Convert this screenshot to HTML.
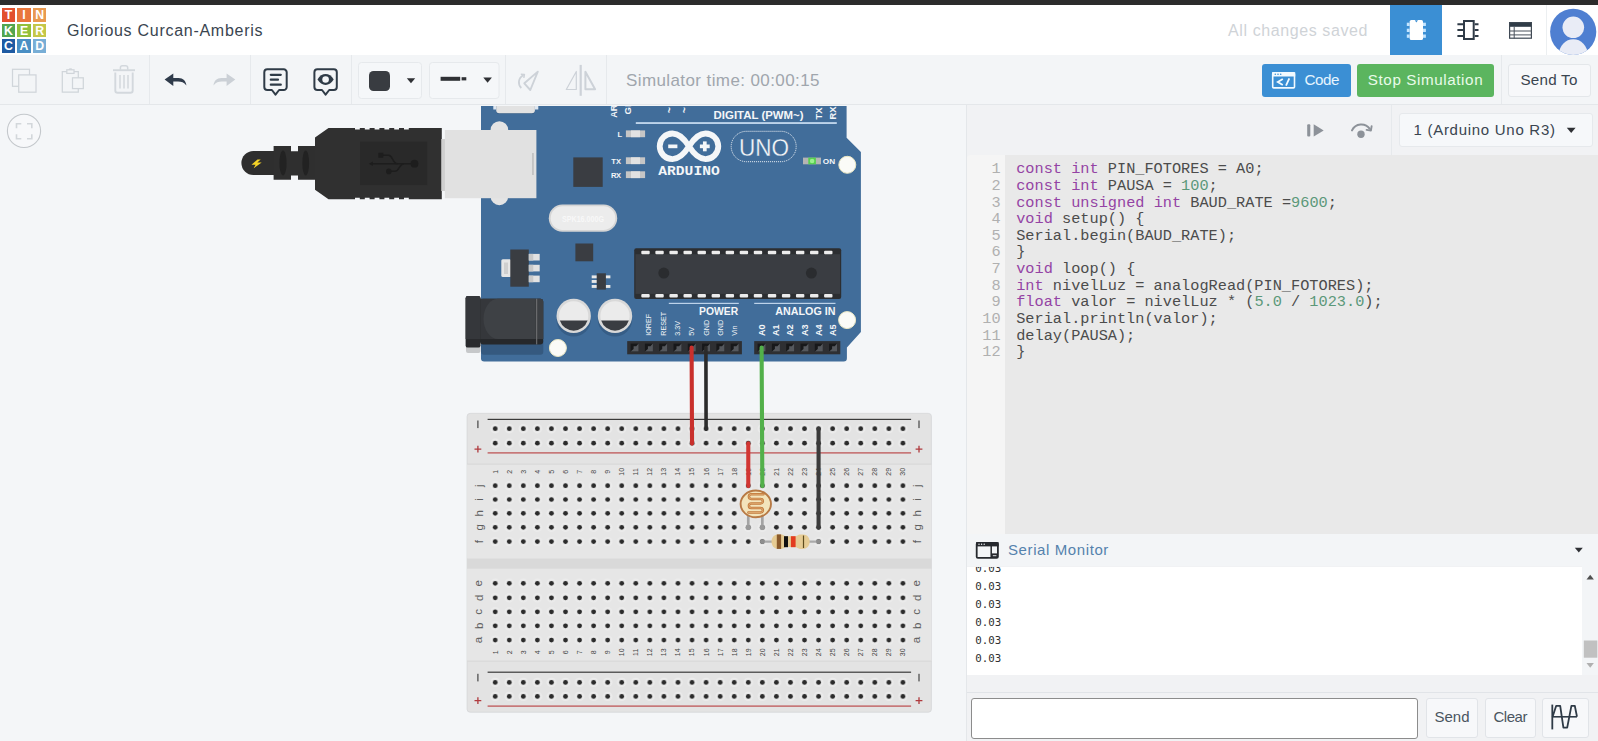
<!DOCTYPE html>
<html lang="en">
<head>
<meta charset="utf-8">
<title>Circuit design Glorious Curcan-Amberis | Tinkercad</title>
<style>
*{box-sizing:border-box;margin:0;padding:0}
html,body{width:1598px;height:741px;overflow:hidden;background:#f4f6f8;font-family:"Liberation Sans",sans-serif;color:#3c4650}
.abs{position:absolute}
#topbar{left:0;top:0;width:1598px;height:5px;background:#2c2c2c}
#header{left:0;top:5px;width:1598px;height:50px;background:#fff}
#toolbar{left:0;top:55px;width:1598px;height:50px;background:#f3f5f7;border-bottom:1px solid #e4e7ea}
.tile{position:absolute;width:13.6px;height:13.6px;color:#fff;font-weight:bold;font-size:12.3px;line-height:14px;text-align:center}
#title{left:67px;top:20px;font-size:16px;line-height:20px;color:#3a4550;white-space:nowrap;letter-spacing:0.72px}
#saved{left:1228px;top:20px;font-size:16px;line-height:20px;color:#c8ccd0;white-space:nowrap}
.vsep{position:absolute;width:1px;background:#e6e9ec}
.btn{position:absolute;top:64px;height:32.5px;border-radius:3px;color:#fff;font-size:15.2px;line-height:32px;white-space:nowrap}
#canvas{left:0;top:104px;width:966px;height:637px;background:#f4f6f8;overflow:hidden}
#right{left:966px;top:104px;width:632px;height:637px;background:#f1f2f4;border-left:1px solid #e4e7ea}
</style>
</head>
<body>
<div class="abs" id="canvas">
<svg class="abs" style="left:0;top:0" width="966" height="637" viewBox="0 104 966 637" font-family="Liberation Sans, sans-serif">
<circle cx="24" cy="130.900" r="16.600" fill="#f7f8fa" stroke="#c4c8cc" stroke-width="1.100"/>
<path d="M16.500 128.300v-4.500h4.800M27 123.800h4.800v4.500M31.800 134.300v4.500h-4.800M21.300 138.800h-4.800v-4.500" fill="none" stroke="#d3d7db" stroke-width="1.600"/>
<g id="usb">
<path d="M253.400 151h21v24h-21a12 12 0 0 1 0 -24z" fill="#2e2e2e"/>
<path d="M257.500 159.500l-6 5.200h4l-1.800 3.600l8 -5.800h-4.400l3.400 -3z" fill="#f5d327"/>
<path d="M273.600 146h17.400v5.200h7v-5.200h17.500v33.700h-17.500v-4.200h-7v4.200h-17.400z" fill="#2f2f2f"/>
<ellipse cx="283" cy="163" rx="3.600" ry="12.500" fill="#222"/>
<ellipse cx="305.700" cy="163" rx="3.400" ry="12.500" fill="#222"/>
<path d="M315 137.500l13.500 -9.500h26.500v1.500h4.800v-1.500h5v1.500h4.800v-1.500h5v1.500h4.800v-1.500h5v1.500h4.800v-1.500h5v1.500h4.800v-1.500h5v1.500h4.800v-1.500h33v71.200h-33v-1.500h-4.800v1.500h-5v-1.500h-4.800v1.500h-5v-1.500h-4.800v1.500h-5v-1.500h-4.800v1.500h-5v-1.500h-4.800v1.500h-5v-1.500h-4.800v1.500h-26.500l-13.500 -9.500z" fill="#303030"/>
<rect x="360.200" y="141.700" width="67" height="43.400" fill="#292929"/>
<g fill="none" stroke="#1d1d1d" stroke-width="1.500"><path d="M371.500 163.700h40"/><path d="M383 155.300H388.500C393 155.300 392.500 163.700 397.500 163.700"/><path d="M391 171.300H395C399.500 171.300 399 163.700 404 163.700"/></g>
<path d="M368.800 163.700l4 -2.300v4.600z" fill="#1d1d1d"/><circle cx="414.500" cy="163.700" r="3.900" fill="#1d1d1d"/><rect x="378.300" y="152.800" width="5" height="5" fill="#1d1d1d"/><circle cx="388.800" cy="171.400" r="2.800" fill="#1d1d1d"/>
</g>
<g id="uno">
<path d="M481 106h365.600v31.800l14.300 14.200v180.100l-14 15.500v10.600a3.200 3.200 0 0 1 -3.200 3.200h-359.500a3.200 3.200 0 0 1 -3.200 -3.200z" fill="#416d9a"/>
<path d="M493.300 106h45v3.500h-45z" fill="#dfe7f0"/>
<path d="M496.200 106h38.700v5a3 3 0 0 1 -3 3h-32.700a3 3 0 0 1 -3 -3z" fill="#355c85"/>
<path d="M496.200 106h38.700v4.200a3 3 0 0 1 -3 3h-32.700a3 3 0 0 1 -3 -3z" fill="#e2e2e2"/>
<rect x="490.600" y="121.200" width="17.600" height="84" rx="8.800" fill="#e4e4e4"/>
<rect x="441.300" y="139" width="5" height="52" fill="#cfcfcf"/>
<rect x="444.900" y="130" width="91.500" height="68.200" fill="#e1e1e1"/>
<rect x="532.300" y="153" width="1.300" height="22" fill="#b8b8b8"/>
<rect x="466" y="343" width="14.500" height="10" rx="2" fill="#c6c8ca"/>
<rect x="481" y="338" width="62.300" height="16.700" rx="3" fill="#35597f"/>
<rect x="480" y="298.800" width="63.200" height="45.600" rx="3" fill="#26282b"/>
<path d="M480 298.800h60.200a3 3 0 0 1 3 3v37.200h-63.200z" fill="#35373b"/>
<path d="M498 298.800h37.600v40.200h-37.600a14.500 20.100 0 0 1 0 -40.200z" fill="#3e4145"/>
<path d="M537.200 298.800h3a3 3 0 0 1 3 3v37.200h-6z" fill="#3c3f43"/>
<rect x="536.200" y="298.800" width="1" height="45.600" fill="#77787a"/>
<rect x="465.600" y="296.100" width="14.900" height="51.500" rx="2.200" fill="#292a2d"/>
<path d="M467.800 296.100h10.500a2.200 2.200 0 0 1 2.200 2.200v40.700h-14.900v-40.700a2.200 2.200 0 0 1 2.200 -2.200z" fill="#35373b"/>
<rect x="573.300" y="157.400" width="29.400" height="29.500" fill="#3a3d42"/>
<rect x="575.400" y="243.500" width="17.800" height="17.800" fill="#3a3d42"/>
<rect x="548.800" y="204.600" width="68.400" height="27.200" rx="13.600" fill="#d5d5d5"/>
<rect x="550.700" y="206.300" width="64.600" height="23.800" rx="11.900" fill="#ececec"/>
<text x="583" y="221.500" font-size="9" fill="#f8f8f8" text-anchor="middle" font-weight="bold" textLength="42" lengthAdjust="spacingAndGlyphs">SPK16.000G</text>
<rect x="501.300" y="259.300" width="10" height="17.700" rx="1.500" fill="#e6e6e6"/><rect x="504" y="262.500" width="4" height="11.500" fill="#cfcfcf"/>
<rect x="510.300" y="249.500" width="18.500" height="37.200" fill="#3a3d42"/>
<rect x="528.800" y="253.9" width="10.900" height="6.600" fill="#e2e2e2"/>
<rect x="528.800" y="253.9" width="4.500" height="6.600" fill="#c9c9c9"/>
<rect x="528.800" y="264.8" width="10.900" height="6.600" fill="#e2e2e2"/>
<rect x="528.800" y="264.8" width="4.500" height="6.600" fill="#c9c9c9"/>
<rect x="528.800" y="275.6" width="10.900" height="6.600" fill="#e2e2e2"/>
<rect x="528.800" y="275.6" width="4.500" height="6.600" fill="#c9c9c9"/>
<rect x="591.700" y="275.4" width="6" height="2.900" fill="#e8e8e8"/>
<rect x="591.700" y="280" width="6" height="2.900" fill="#e8e8e8"/>
<rect x="591.700" y="285" width="6" height="2.900" fill="#e8e8e8"/>
<rect x="605" y="275.4" width="5.400" height="2.900" fill="#e8e8e8"/>
<rect x="605" y="285" width="5.400" height="2.900" fill="#e8e8e8"/>
<rect x="596.700" y="273.300" width="9.200" height="16.300" fill="#3a3d42"/>
<circle cx="573.7" cy="319.400" r="17.200" fill="#365d86"/>
<circle cx="573.7" cy="315.900" r="17.200" fill="#d9d9d9"/>
<circle cx="573.7" cy="315.900" r="14.600" fill="#ebebeb"/>
<path d="M559.8 320.500h27.800a14.600 14.600 0 0 1 -27.800 0z" fill="#3a3d42"/>
<circle cx="615" cy="319.400" r="17.200" fill="#365d86"/>
<circle cx="615" cy="315.900" r="17.200" fill="#d9d9d9"/>
<circle cx="615" cy="315.900" r="14.600" fill="#ebebeb"/>
<path d="M601.1 320.500h27.800a14.600 14.600 0 0 1 -27.800 0z" fill="#3a3d42"/>
<circle cx="847.3" cy="164.8" r="8.500" fill="#fbfbf7" stroke="#ece8c4" stroke-width="1"/>
<circle cx="847.1" cy="320.1" r="8.500" fill="#fbfbf7" stroke="#ece8c4" stroke-width="1"/>
<circle cx="557.9" cy="348" r="8.500" fill="#fbfbf7" stroke="#ece8c4" stroke-width="1"/>
<rect x="634.200" y="248.300" width="207" height="50.700" rx="2" fill="#2c2e31"/>
<rect x="635.500" y="254.200" width="204.500" height="39.700" fill="#3a3d42"/>
<rect x="641.3" y="250.700" width="8.400" height="3.500" rx="1" fill="#ececec"/>
<rect x="641.3" y="294.100" width="8.400" height="3.500" rx="1" fill="#ececec"/>
<rect x="655.36" y="250.700" width="8.400" height="3.500" rx="1" fill="#ececec"/>
<rect x="655.36" y="294.100" width="8.400" height="3.500" rx="1" fill="#ececec"/>
<rect x="669.42" y="250.700" width="8.400" height="3.500" rx="1" fill="#ececec"/>
<rect x="669.42" y="294.100" width="8.400" height="3.500" rx="1" fill="#ececec"/>
<rect x="683.48" y="250.700" width="8.400" height="3.500" rx="1" fill="#ececec"/>
<rect x="683.48" y="294.100" width="8.400" height="3.500" rx="1" fill="#ececec"/>
<rect x="697.54" y="250.700" width="8.400" height="3.500" rx="1" fill="#ececec"/>
<rect x="697.54" y="294.100" width="8.400" height="3.500" rx="1" fill="#ececec"/>
<rect x="711.6" y="250.700" width="8.400" height="3.500" rx="1" fill="#ececec"/>
<rect x="711.6" y="294.100" width="8.400" height="3.500" rx="1" fill="#ececec"/>
<rect x="725.66" y="250.700" width="8.400" height="3.500" rx="1" fill="#ececec"/>
<rect x="725.66" y="294.100" width="8.400" height="3.500" rx="1" fill="#ececec"/>
<rect x="739.72" y="250.700" width="8.400" height="3.500" rx="1" fill="#ececec"/>
<rect x="739.72" y="294.100" width="8.400" height="3.500" rx="1" fill="#ececec"/>
<rect x="753.78" y="250.700" width="8.400" height="3.500" rx="1" fill="#ececec"/>
<rect x="753.78" y="294.100" width="8.400" height="3.500" rx="1" fill="#ececec"/>
<rect x="767.84" y="250.700" width="8.400" height="3.500" rx="1" fill="#ececec"/>
<rect x="767.84" y="294.100" width="8.400" height="3.500" rx="1" fill="#ececec"/>
<rect x="781.9" y="250.700" width="8.400" height="3.500" rx="1" fill="#ececec"/>
<rect x="781.9" y="294.100" width="8.400" height="3.500" rx="1" fill="#ececec"/>
<rect x="795.96" y="250.700" width="8.400" height="3.500" rx="1" fill="#ececec"/>
<rect x="795.96" y="294.100" width="8.400" height="3.500" rx="1" fill="#ececec"/>
<rect x="810.02" y="250.700" width="8.400" height="3.500" rx="1" fill="#ececec"/>
<rect x="810.02" y="294.100" width="8.400" height="3.500" rx="1" fill="#ececec"/>
<rect x="824.08" y="250.700" width="8.400" height="3.500" rx="1" fill="#ececec"/>
<rect x="824.08" y="294.100" width="8.400" height="3.500" rx="1" fill="#ececec"/>
<circle cx="663.800" cy="273.100" r="5.500" fill="#2a2c2f"/><circle cx="811.400" cy="273.100" r="5.500" fill="#2a2c2f"/>
<rect x="625.900" y="130.4" width="19.200" height="6.800" fill="#c6c6c6"/>
<rect x="631" y="130.4" width="9" height="6.800" fill="#e2e2e2"/>
<rect x="625.900" y="157.3" width="19.200" height="6.800" fill="#c6c6c6"/>
<rect x="631" y="157.3" width="9" height="6.800" fill="#e2e2e2"/>
<rect x="625.900" y="171.3" width="19.200" height="6.800" fill="#c6c6c6"/>
<rect x="631" y="171.3" width="9" height="6.800" fill="#e2e2e2"/>
<rect x="803" y="157.600" width="18" height="6.700" fill="#b4b4b4"/><rect x="808.300" y="157.600" width="7.600" height="6.700" fill="#55d04f"/><circle cx="812.100" cy="161" r="2.300" fill="#9af08e"/>
<g fill="#f4f6f8" font-weight="bold">
<text x="617.600" y="137.200" font-size="7.600">L</text>
<text x="611.300" y="164" font-size="7.600" textLength="9.800">TX</text>
<text x="611" y="178" font-size="7.600" textLength="10.200">RX</text>
<text x="822.800" y="163.500" font-size="7.600" textLength="12.300" lengthAdjust="spacingAndGlyphs">ON</text>
<text x="713.600" y="119" font-size="10.800" textLength="90" lengthAdjust="spacingAndGlyphs">DIGITAL (PWM~)</text>
<text x="699" y="315.200" font-size="10.400" textLength="39.200" lengthAdjust="spacingAndGlyphs">POWER</text>
<text x="775.300" y="315.200" font-size="10.400" textLength="60.200" lengthAdjust="spacingAndGlyphs">ANALOG IN</text>
<text x="658.300" y="174.800" font-size="13.600" textLength="61.400" lengthAdjust="spacingAndGlyphs" font-family="Liberation Mono, monospace">ARDUINO</text>
</g>
<rect x="635.800" y="122.100" width="201" height="1.900" fill="#bdd3ea"/>
<rect x="668.800" y="302.800" width="70" height="1.200" fill="#bdd3ea"/>
<rect x="754.200" y="302.800" width="81.300" height="1.200" fill="#bdd3ea"/>
<text transform="translate(651.3 335.8) rotate(-90)" font-size="7.2" fill="#f4f6f8" >IOREF</text>
<text transform="translate(665.6 335.8) rotate(-90)" font-size="7.2" fill="#f4f6f8" >RESET</text>
<text transform="translate(679.9 335.8) rotate(-90)" font-size="7.2" fill="#f4f6f8" >3.3V</text>
<text transform="translate(694.2 335.8) rotate(-90)" font-size="7.2" fill="#f4f6f8" >5V</text>
<text transform="translate(708.5 335.8) rotate(-90)" font-size="7.2" fill="#f4f6f8" >GND</text>
<text transform="translate(722.8 335.8) rotate(-90)" font-size="7.2" fill="#f4f6f8" >GND</text>
<text transform="translate(737.1 335.8) rotate(-90)" font-size="7.2" fill="#f4f6f8" >Vin</text>
<text transform="translate(764.7 336) rotate(-90)" font-size="9.1" fill="#f4f6f8" font-weight="bold">A0</text>
<text transform="translate(779 336) rotate(-90)" font-size="9.1" fill="#f4f6f8" font-weight="bold">A1</text>
<text transform="translate(793.3 336) rotate(-90)" font-size="9.1" fill="#f4f6f8" font-weight="bold">A2</text>
<text transform="translate(807.6 336) rotate(-90)" font-size="9.1" fill="#f4f6f8" font-weight="bold">A3</text>
<text transform="translate(821.9 336) rotate(-90)" font-size="9.1" fill="#f4f6f8" font-weight="bold">A4</text>
<text transform="translate(836.2 336) rotate(-90)" font-size="9.1" fill="#f4f6f8" font-weight="bold">A5</text>
<text transform="translate(821.8 119.6) rotate(-90)" font-size="9.4" fill="#f4f6f8" font-weight="bold">TX</text>
<text transform="translate(836 119.6) rotate(-90)" font-size="9.4" fill="#f4f6f8" font-weight="bold">RX</text>
<clipPath id="topclip"><rect x="480" y="106" width="400" height="40"/></clipPath><g clip-path="url(#topclip)">
<text transform="translate(616.6 117.8) rotate(-90)" font-size="9" fill="#f4f6f8" font-weight="bold">AREF</text>
<text transform="translate(630.6 114.5) rotate(-90)" font-size="9.6" fill="#f4f6f8" font-weight="bold">GND</text>
</g>
<text transform="translate(673 113.2) rotate(-90)" font-size="10.5" fill="#f4f6f8" font-weight="bold">~</text>
<text transform="translate(687.6 113.2) rotate(-90)" font-size="10.5" fill="#f4f6f8" font-weight="bold">~</text>
<g fill="none" stroke="#f4f6f8" stroke-width="5.800"><path d="M689 146.300c-5 -8 -10 -12.800 -16.500 -12.800a12.800 12.800 0 0 0 0 25.600c6.500 0 11.500 -4.800 16.500 -12.800c5 -8 10 -12.800 16.500 -12.800a12.800 12.800 0 0 1 0 25.600c-6.500 0 -11.500 -4.800 -16.500 -12.800z"/></g>
<rect x="668.200" y="144.500" width="9.200" height="3.700" fill="#f4f6f8"/><rect x="699.900" y="144.500" width="9.800" height="3.700" fill="#f4f6f8"/><rect x="702.950" y="141.400" width="3.700" height="9.900" fill="#f4f6f8"/>
<rect x="731.200" y="131.300" width="65" height="30.400" rx="15.200" fill="none" stroke="#f4f6f8" stroke-width="0.900" stroke-dasharray="1.100 0.900"/>
<text x="764" y="155.600" font-size="24.600" text-anchor="middle" fill="#f4f6f8" stroke="#416d9a" stroke-width="0.300" textLength="50" lengthAdjust="spacingAndGlyphs">UNO</text>
<rect x="627.2" y="341.100" width="114.7" height="13.200" fill="#2e2f32"/>
<rect x="630.6" y="343.600" width="8" height="8" fill="#17181a"/>
<path d="M630.6 351.600l3 -2.600v-2.800h2.600l2.400 -2.600v8z" fill="#55585d"/>
<rect x="644.9" y="343.600" width="8" height="8" fill="#17181a"/>
<path d="M644.9 351.600l3 -2.600v-2.800h2.600l2.400 -2.600v8z" fill="#55585d"/>
<rect x="659.2" y="343.600" width="8" height="8" fill="#17181a"/>
<path d="M659.2 351.600l3 -2.600v-2.800h2.600l2.400 -2.600v8z" fill="#55585d"/>
<rect x="673.5" y="343.600" width="8" height="8" fill="#17181a"/>
<path d="M673.5 351.600l3 -2.600v-2.800h2.600l2.400 -2.600v8z" fill="#55585d"/>
<rect x="687.8" y="343.600" width="8" height="8" fill="#17181a"/>
<path d="M687.8 351.600l3 -2.600v-2.800h2.600l2.400 -2.600v8z" fill="#55585d"/>
<rect x="702.1" y="343.600" width="8" height="8" fill="#17181a"/>
<path d="M702.1 351.600l3 -2.600v-2.800h2.600l2.400 -2.600v8z" fill="#55585d"/>
<rect x="716.4" y="343.600" width="8" height="8" fill="#17181a"/>
<path d="M716.4 351.600l3 -2.600v-2.800h2.600l2.400 -2.600v8z" fill="#55585d"/>
<rect x="730.7" y="343.600" width="8" height="8" fill="#17181a"/>
<path d="M730.7 351.600l3 -2.600v-2.800h2.600l2.400 -2.600v8z" fill="#55585d"/>
<rect x="754.2" y="341.100" width="86.1" height="13.200" fill="#2e2f32"/>
<rect x="757.6" y="343.600" width="8" height="8" fill="#17181a"/>
<path d="M757.6 351.600l3 -2.600v-2.800h2.600l2.400 -2.600v8z" fill="#55585d"/>
<rect x="771.9" y="343.600" width="8" height="8" fill="#17181a"/>
<path d="M771.9 351.600l3 -2.600v-2.800h2.600l2.400 -2.600v8z" fill="#55585d"/>
<rect x="786.2" y="343.600" width="8" height="8" fill="#17181a"/>
<path d="M786.2 351.600l3 -2.600v-2.800h2.600l2.400 -2.600v8z" fill="#55585d"/>
<rect x="800.5" y="343.600" width="8" height="8" fill="#17181a"/>
<path d="M800.5 351.600l3 -2.600v-2.800h2.600l2.400 -2.600v8z" fill="#55585d"/>
<rect x="814.8" y="343.600" width="8" height="8" fill="#17181a"/>
<path d="M814.8 351.600l3 -2.600v-2.800h2.600l2.400 -2.600v8z" fill="#55585d"/>
<rect x="829.1" y="343.600" width="8" height="8" fill="#17181a"/>
<path d="M829.1 351.600l3 -2.600v-2.800h2.600l2.400 -2.600v8z" fill="#55585d"/>
</g>
<g id="bb">
<rect x="467.100" y="413.400" width="464.300" height="298.800" rx="3" fill="#e3e3e3"/>
<rect x="467.100" y="413.400" width="464.300" height="298.800" rx="3" fill="none" stroke="#d4d6d8" stroke-width="0.800"/>
<rect x="467.100" y="464.100" width="464.300" height="94.500" fill="#e6e6e6"/>
<rect x="467.100" y="568.600" width="464.300" height="92.500" fill="#e6e6e6"/>
<rect x="467.100" y="558.600" width="464.300" height="10" fill="#d9d9d9"/>
<rect x="467.100" y="463.600" width="464.300" height="1" fill="#d6d6d6"/>
<rect x="467.100" y="660.600" width="464.300" height="1" fill="#d6d6d6"/>
<rect x="487.600" y="418.8" width="423.500" height="1.200" fill="#3a3a3a"/>
<rect x="487.600" y="671.6" width="423.500" height="1.200" fill="#3a3a3a"/>
<rect x="487.600" y="452.3" width="423.500" height="1.200" fill="#bb4a4c"/>
<rect x="487.600" y="705.5" width="423.500" height="1.200" fill="#bb4a4c"/>
<rect x="477.3" y="420.5" width="1.200" height="7.600" fill="#444"/>
<rect x="477.3" y="673.8" width="1.200" height="7.600" fill="#444"/>
<path d="M474.5 449.2h6.800M477.9 445.8v6.800" stroke="#b03a3e" stroke-width="1.300" fill="none"/>
<path d="M474.5 700.7h6.800M477.9 697.3v6.800" stroke="#b03a3e" stroke-width="1.300" fill="none"/>
<rect x="918.4" y="420.5" width="1.200" height="7.600" fill="#444"/>
<rect x="918.4" y="673.8" width="1.200" height="7.600" fill="#444"/>
<path d="M915.6 449.2h6.800M919 445.8v6.800" stroke="#b03a3e" stroke-width="1.300" fill="none"/>
<path d="M915.6 700.7h6.800M919 697.3v6.800" stroke="#b03a3e" stroke-width="1.300" fill="none"/>
<pattern id="hp" patternUnits="userSpaceOnUse" x="488.17" y="413" width="14.06" height="300">
<circle cx="7.03" cy="15.7" r="4.700" fill="#ececec"/><circle cx="7.03" cy="15.7" r="3.400" fill="#e0e0e0" opacity="0.6"/><circle cx="7.03" cy="15.7" r="2.350" fill="#2b2b2b"/>
<circle cx="7.03" cy="30.2" r="4.700" fill="#ececec"/><circle cx="7.03" cy="30.2" r="3.400" fill="#e0e0e0" opacity="0.6"/><circle cx="7.03" cy="30.2" r="2.350" fill="#2b2b2b"/>
<circle cx="7.03" cy="269.4" r="4.700" fill="#ececec"/><circle cx="7.03" cy="269.4" r="3.400" fill="#e0e0e0" opacity="0.6"/><circle cx="7.03" cy="269.4" r="2.350" fill="#2b2b2b"/>
<circle cx="7.03" cy="283.4" r="4.700" fill="#ececec"/><circle cx="7.03" cy="283.4" r="3.400" fill="#e0e0e0" opacity="0.6"/><circle cx="7.03" cy="283.4" r="2.350" fill="#2b2b2b"/>
<circle cx="7.03" cy="72.7" r="4.700" fill="#ececec"/><circle cx="7.03" cy="72.7" r="3.400" fill="#e0e0e0" opacity="0.6"/><circle cx="7.03" cy="72.7" r="2.350" fill="#2b2b2b"/>
<circle cx="7.03" cy="86.5" r="4.700" fill="#ececec"/><circle cx="7.03" cy="86.5" r="3.400" fill="#e0e0e0" opacity="0.6"/><circle cx="7.03" cy="86.5" r="2.350" fill="#2b2b2b"/>
<circle cx="7.03" cy="100.3" r="4.700" fill="#ececec"/><circle cx="7.03" cy="100.3" r="3.400" fill="#e0e0e0" opacity="0.6"/><circle cx="7.03" cy="100.3" r="2.350" fill="#2b2b2b"/>
<circle cx="7.03" cy="114.3" r="4.700" fill="#ececec"/><circle cx="7.03" cy="114.3" r="3.400" fill="#e0e0e0" opacity="0.6"/><circle cx="7.03" cy="114.3" r="2.350" fill="#2b2b2b"/>
<circle cx="7.03" cy="128.6" r="4.700" fill="#ececec"/><circle cx="7.03" cy="128.6" r="3.400" fill="#e0e0e0" opacity="0.6"/><circle cx="7.03" cy="128.6" r="2.350" fill="#2b2b2b"/>
<circle cx="7.03" cy="170.3" r="4.700" fill="#ececec"/><circle cx="7.03" cy="170.3" r="3.400" fill="#e0e0e0" opacity="0.6"/><circle cx="7.03" cy="170.3" r="2.350" fill="#2b2b2b"/>
<circle cx="7.03" cy="184.8" r="4.700" fill="#ececec"/><circle cx="7.03" cy="184.8" r="3.400" fill="#e0e0e0" opacity="0.6"/><circle cx="7.03" cy="184.8" r="2.350" fill="#2b2b2b"/>
<circle cx="7.03" cy="198.8" r="4.700" fill="#ececec"/><circle cx="7.03" cy="198.8" r="3.400" fill="#e0e0e0" opacity="0.6"/><circle cx="7.03" cy="198.8" r="2.350" fill="#2b2b2b"/>
<circle cx="7.03" cy="212.8" r="4.700" fill="#ececec"/><circle cx="7.03" cy="212.8" r="3.400" fill="#e0e0e0" opacity="0.6"/><circle cx="7.03" cy="212.8" r="2.350" fill="#2b2b2b"/>
<circle cx="7.03" cy="227.1" r="4.700" fill="#ececec"/><circle cx="7.03" cy="227.1" r="3.400" fill="#e0e0e0" opacity="0.6"/><circle cx="7.03" cy="227.1" r="2.350" fill="#2b2b2b"/>
</pattern>
<rect x="488.17" y="413" width="421.8" height="300" fill="url(#hp)"/>
<g font-size="7" fill="#444" text-anchor="middle">
<text transform="translate(497.6 471.8) rotate(-90)">1</text>
<text transform="translate(497.6 652.3) rotate(-90)">1</text>
<text transform="translate(511.66 471.8) rotate(-90)">2</text>
<text transform="translate(511.66 652.3) rotate(-90)">2</text>
<text transform="translate(525.72 471.8) rotate(-90)">3</text>
<text transform="translate(525.72 652.3) rotate(-90)">3</text>
<text transform="translate(539.78 471.8) rotate(-90)">4</text>
<text transform="translate(539.78 652.3) rotate(-90)">4</text>
<text transform="translate(553.84 471.8) rotate(-90)">5</text>
<text transform="translate(553.84 652.3) rotate(-90)">5</text>
<text transform="translate(567.9 471.8) rotate(-90)">6</text>
<text transform="translate(567.9 652.3) rotate(-90)">6</text>
<text transform="translate(581.96 471.8) rotate(-90)">7</text>
<text transform="translate(581.96 652.3) rotate(-90)">7</text>
<text transform="translate(596.02 471.8) rotate(-90)">8</text>
<text transform="translate(596.02 652.3) rotate(-90)">8</text>
<text transform="translate(610.08 471.8) rotate(-90)">9</text>
<text transform="translate(610.08 652.3) rotate(-90)">9</text>
<text transform="translate(624.14 471.8) rotate(-90)">10</text>
<text transform="translate(624.14 652.3) rotate(-90)">10</text>
<text transform="translate(638.2 471.8) rotate(-90)">11</text>
<text transform="translate(638.2 652.3) rotate(-90)">11</text>
<text transform="translate(652.26 471.8) rotate(-90)">12</text>
<text transform="translate(652.26 652.3) rotate(-90)">12</text>
<text transform="translate(666.32 471.8) rotate(-90)">13</text>
<text transform="translate(666.32 652.3) rotate(-90)">13</text>
<text transform="translate(680.38 471.8) rotate(-90)">14</text>
<text transform="translate(680.38 652.3) rotate(-90)">14</text>
<text transform="translate(694.44 471.8) rotate(-90)">15</text>
<text transform="translate(694.44 652.3) rotate(-90)">15</text>
<text transform="translate(708.5 471.8) rotate(-90)">16</text>
<text transform="translate(708.5 652.3) rotate(-90)">16</text>
<text transform="translate(722.56 471.8) rotate(-90)">17</text>
<text transform="translate(722.56 652.3) rotate(-90)">17</text>
<text transform="translate(736.62 471.8) rotate(-90)">18</text>
<text transform="translate(736.62 652.3) rotate(-90)">18</text>
<text transform="translate(750.68 471.8) rotate(-90)">19</text>
<text transform="translate(750.68 652.3) rotate(-90)">19</text>
<text transform="translate(764.74 471.8) rotate(-90)">20</text>
<text transform="translate(764.74 652.3) rotate(-90)">20</text>
<text transform="translate(778.8 471.8) rotate(-90)">21</text>
<text transform="translate(778.8 652.3) rotate(-90)">21</text>
<text transform="translate(792.86 471.8) rotate(-90)">22</text>
<text transform="translate(792.86 652.3) rotate(-90)">22</text>
<text transform="translate(806.92 471.8) rotate(-90)">23</text>
<text transform="translate(806.92 652.3) rotate(-90)">23</text>
<text transform="translate(820.98 471.8) rotate(-90)">24</text>
<text transform="translate(820.98 652.3) rotate(-90)">24</text>
<text transform="translate(835.04 471.8) rotate(-90)">25</text>
<text transform="translate(835.04 652.3) rotate(-90)">25</text>
<text transform="translate(849.1 471.8) rotate(-90)">26</text>
<text transform="translate(849.1 652.3) rotate(-90)">26</text>
<text transform="translate(863.16 471.8) rotate(-90)">27</text>
<text transform="translate(863.16 652.3) rotate(-90)">27</text>
<text transform="translate(877.22 471.8) rotate(-90)">28</text>
<text transform="translate(877.22 652.3) rotate(-90)">28</text>
<text transform="translate(891.28 471.8) rotate(-90)">29</text>
<text transform="translate(891.28 652.3) rotate(-90)">29</text>
<text transform="translate(905.34 471.8) rotate(-90)">30</text>
<text transform="translate(905.34 652.3) rotate(-90)">30</text>
</g>
<g font-size="11.500" fill="#606060" text-anchor="middle">
<text transform="translate(483 485.7) rotate(-90)">j</text>
<text transform="translate(920.9 485.7) rotate(-90)">j</text>
<text transform="translate(483 499.5) rotate(-90)">i</text>
<text transform="translate(920.9 499.5) rotate(-90)">i</text>
<text transform="translate(483 513.3) rotate(-90)">h</text>
<text transform="translate(920.9 513.3) rotate(-90)">h</text>
<text transform="translate(483 527.3) rotate(-90)">g</text>
<text transform="translate(920.9 527.3) rotate(-90)">g</text>
<text transform="translate(483 541.6) rotate(-90)">f</text>
<text transform="translate(920.9 541.6) rotate(-90)">f</text>
<text transform="translate(481.9 583.3) rotate(-90)">e</text>
<text transform="translate(919.8 583.3) rotate(-90)">e</text>
<text transform="translate(483 597.8) rotate(-90)">d</text>
<text transform="translate(920.9 597.8) rotate(-90)">d</text>
<text transform="translate(481.9 611.8) rotate(-90)">c</text>
<text transform="translate(919.8 611.8) rotate(-90)">c</text>
<text transform="translate(483 625.8) rotate(-90)">b</text>
<text transform="translate(920.9 625.8) rotate(-90)">b</text>
<text transform="translate(481.9 640.1) rotate(-90)">a</text>
<text transform="translate(919.8 640.1) rotate(-90)">a</text>
</g>
</g>
<g id="wires">
<path d="M691.6 347.5L692.04 443.6" stroke="#c9302c" stroke-width="4.1" stroke-linecap="round" fill="none"/>
<path d="M705.9 347.5L706.1 429.1" stroke="#2b2b2b" stroke-width="3.6" stroke-linecap="round" fill="none"/>
<path d="M761.6 347.5L762.34 486.1" stroke="#52b04a" stroke-width="4.1" stroke-linecap="round" fill="none"/>
<path d="M748.28 443.2L748.28 486.1" stroke="#d23632" stroke-width="4.1" stroke-linecap="round" fill="none"/>
<path d="M818.58 428.7L818.58 527.7" stroke="#3b3b3b" stroke-width="4.1" stroke-linecap="round" fill="none"/>
<path d="M748.28 527.3L748.28 515" stroke="#a4a4a4" stroke-width="2.7" stroke-linecap="round" fill="none"/>
<path d="M762.34 527.3L762.34 515" stroke="#a4a4a4" stroke-width="2.7" stroke-linecap="round" fill="none"/>
<circle cx="748.28" cy="527.500" r="2.600" fill="#9a9a9a"/><circle cx="762.34" cy="527.500" r="2.600" fill="#9a9a9a"/>
<ellipse cx="755.800" cy="503.900" rx="15.200" ry="13.400" fill="#f3e4bb" stroke="#b87a45" stroke-width="1.900"/>
<path d="M763.400 494.300h-12.200a2.300 2.300 0 0 0 0 4.600h9.400a2.250 2.250 0 0 1 0 4.500h-9.400a2.300 2.300 0 0 0 0 4.600h9.400a2.250 2.250 0 0 1 0 4.500h-12.200" fill="none" stroke="#c27a3c" stroke-width="2.500" stroke-linecap="round"/>
<path d="M763.400 494.300h-12.200a2.300 2.300 0 0 0 0 4.600h9.400a2.250 2.250 0 0 1 0 4.500h-9.400a2.300 2.300 0 0 0 0 4.600h9.400a2.250 2.250 0 0 1 0 4.500h-12.200" fill="none" stroke="#e9b981" stroke-width="0.700" stroke-linecap="round"/>
<path d="M762.34 541.6L818.58 541.6" stroke="#a9a9a9" stroke-width="2.2" stroke-linecap="round" fill="none"/>
<circle cx="762.34" cy="541.600" r="2.400" fill="#8e8e8e"/><circle cx="818.58" cy="541.600" r="2.400" fill="#8e8e8e"/>
<path d="M771.500 541.600c0 -4 2.500 -7.200 6.500 -7.200h3.500c2 0 3 1.800 5 1.800h8.500c2 0 3 -1.800 5 -1.800h3.200c4 0 6.500 3.200 6.500 7.200c0 4 -2.500 7.300 -6.500 7.300h-3.200c-2 0 -3 -1.800 -5 -1.800h-8.500c-2 0 -3 1.800 -5 1.800h-3.500c-4 0 -6.500 -3.300 -6.500 -7.300z" fill="#e6cc94"/>
<rect x="776.800" y="534.400" width="4.300" height="14.500" fill="#8a5a2c"/>
<rect x="784" y="536.200" width="4" height="11" fill="#111"/>
<rect x="790.900" y="536.200" width="4.700" height="11" fill="#e33c1f"/>
<rect x="802.900" y="535.500" width="1.200" height="12.500" fill="#5e4c1e"/>
</g>
</svg>
</div>
<div class="abs" id="right">

<style>
#rp *{position:absolute}
#gut{left:0;top:51px;width:37.6px;height:379px;background:#f5f5f5;border-top-left-radius:3px}
#gut div{position:static;text-align:right;padding-right:4px;color:#b0b0b0}
#ed{left:37.6px;top:51px;width:594.4px;height:379px;background:#e9e9e9}
#gut,#ed{font-family:"Liberation Mono",monospace;font-size:15.28px;line-height:16.65px;padding-top:6.2px;white-space:pre}
#ed div{position:static;padding-left:11.6px;color:#4c4c4c}
#ed span{position:static}
.k{color:#9443a4} .n{color:#5b9879}
#con{left:0;top:462.6px;width:615px;height:108.4px;background:#fff;overflow:hidden;font-family:"DejaVu Sans Mono",monospace;font-size:10.8px;line-height:17.95px;color:#303030;white-space:pre}
#con div{position:static;padding-left:8.3px}
.sb{top:594px;height:40px;background:#f7f8fa;border:1px solid #e1e4e8;border-radius:3px;font-size:15px;line-height:36px;text-align:center;color:#4a5560}
</style>
<div id="rp" style="left:0;top:0;width:632px;height:637px">
 <div style="left:424px;top:0;width:1px;height:51px;background:#e6e9ec"></div>
 <div style="left:432px;top:9px;width:194px;height:34px;background:#f6f8fa;border:1px solid #e6e9ec;border-radius:3px"></div>
 <div id="ardsel" style="left:446.5px;top:16.3px;font-size:15px;line-height:20px;color:#3a4550;white-space:nowrap;letter-spacing:0.72px">1 (Arduino Uno R3)</div>
 <svg style="left:329px;top:10px" width="300" height="34" viewBox="1296 114 300 34">
  <path d="M1566.800 127.800h8.800l-4.400 5.200z" fill="#2f3135"/>
  <rect x="1307.200" y="124.200" width="3.100" height="12.400" rx="1" fill="#8d9299"/>
  <path d="M1313.700 124.200l10 6.200l-10 6.200z" fill="#8d9299"/>
  <path d="M1352 130.400a10.400 10.400 0 0 1 17.800 -1.600" fill="none" stroke="#8d9299" stroke-width="2" stroke-linecap="round"/>
  <path d="M1366.600 129.900l4.300 0.700l0.700 -4.300" fill="none" stroke="#8d9299" stroke-width="1.900" stroke-linejoin="round" stroke-linecap="round"/>
  <circle cx="1361" cy="134.200" r="3.700" fill="#8d9299"/>
 </svg>
 <div id="gut"><div>1</div><div>2</div><div>3</div><div>4</div><div>5</div><div>6</div><div>7</div><div>8</div><div>9</div><div>10</div><div>11</div><div>12</div></div>
 <div id="ed"><div><span class="k">const</span> <span class="k">int</span> PIN_FOTORES = A0;</div><div><span class="k">const</span> <span class="k">int</span> PAUSA = <span class="n">100</span>;</div><div><span class="k">const</span> <span class="k">unsigned</span> <span class="k">int</span> BAUD_RATE =<span class="n">9600</span>;</div><div><span class="k">void</span> setup() {</div><div>Serial.begin(BAUD_RATE);</div><div>}</div><div><span class="k">void</span> loop() {</div><div><span class="k">int</span> nivelLuz = analogRead(PIN_FOTORES);</div><div><span class="k">float</span> valor = nivelLuz * (<span class="n">5.0</span> / <span class="n">1023.0</span>);</div><div>Serial.println(valor);</div><div>delay(PAUSA);</div><div>}</div></div>
 <div style="left:0;top:430px;width:632px;height:32px;background:#f3f5f7"></div>
 <svg style="left:0;top:430px" width="632" height="32" viewBox="967 534 632 32">
  <rect x="976.700" y="542.900" width="21.200" height="15" rx="1.200" fill="none" stroke="#26292e" stroke-width="1.800"/>
  <rect x="976" y="542.200" width="22.600" height="4.200" fill="#26292e"/>
  <circle cx="979" cy="544.200" r="0.700" fill="#f3f5f7"/><circle cx="981.600" cy="544.200" r="0.700" fill="#f3f5f7"/><circle cx="984.200" cy="544.200" r="0.700" fill="#f3f5f7"/>
  <path d="M991.200 546v12" stroke="#26292e" stroke-width="1.500"/>
  <rect x="991.200" y="553.400" width="6.500" height="4.600" fill="#26292e"/>
  <path d="M992.800 555.700h3.600" stroke="#f3f5f7" stroke-width="0.900"/>
  <path d="M1574.800 547.700h8l-4 4.700z" fill="#2f3135"/>
 </svg>
 <div id="smt" style="left:41px;top:436px;font-size:15px;line-height:20px;color:#5582ad;white-space:nowrap;letter-spacing:0.6px">Serial Monitor</div>
 <div id="con"><div style="margin-top:-6.2px">0.03</div><div>0.03</div><div>0.03</div><div>0.03</div><div>0.03</div><div>0.03</div></div>
 <div style="left:615px;top:462px;width:17px;height:109px;background:#f3f5f7"></div>
 <svg style="left:615px;top:462px" width="17" height="109" viewBox="1582 566 17 109">
  <path d="M1586.500 579.500h7.400l-3.700 -4.800z" fill="#505050"/>
  <rect x="1583.800" y="640.500" width="13.500" height="17.200" fill="#c1c1c1"/>
  <path d="M1586.500 663h7.400l-3.700 4.800z" fill="#b0b0b0"/>
 </svg>
 <div style="left:0;top:588px;width:632px;height:1px;background:#e1e4e8"></div>
 <div style="left:4px;top:594px;width:447px;height:40.500px;background:#fff;border:1.3px solid #8c8c8c;border-radius:3px"></div>
 <div class="sb" style="left:459px;width:52px">Send</div>
 <div class="sb" style="left:517.500px;width:51.500px;letter-spacing:-0.45px">Clear</div>
 <div class="sb" style="left:575px;width:47px"></div>
 <svg style="left:575px;top:594px" width="47" height="40" viewBox="1542 698 47 40">
  <path d="M1552.300 704.600v24.800" fill="none" stroke="#2f3b47" stroke-width="1.800"/>
  <path d="M1552.300 716.800h24.700" fill="none" stroke="#2f3b47" stroke-width="1.600"/>
  <path d="M1552.600 716.800l3.600 -11h4l3.200 21.900h3.800l4.200 -21.900h3.400l2.200 11" fill="none" stroke="#2f3b47" stroke-width="1.800" stroke-linejoin="round"/>
 </svg>
</div>

</div>
<div class="abs" id="toolbar">

<svg class="abs" style="left:0;top:0" width="1598" height="49" viewBox="0 55 1598 49">
 <g fill="none" stroke="#d0d5da" stroke-width="1.25">
  <rect x="12.5" y="69.3" width="17" height="17" />
  <rect x="18.7" y="74.9" width="17.3" height="17.3" fill="#f3f5f7"/>
  <path d="M66.8 71.5h-4.5v20.5h16v-20.5h-4.3"/>
  <rect x="66.8" y="69.8" width="7.2" height="3.6"/>
  <path d="M69 69.8a1.6 1.6 0 0 1 3 0"/>
  <rect x="72.5" y="77.8" width="10.8" height="10.8" fill="#f3f5f7"/>
 </g>
 <g fill="none" stroke="#d3d8dd" stroke-width="1.9">
  <path d="M113 70.2h22"/>
  <path d="M120.4 69.8v-2a2 2 0 0 1 2-2h3.3a2 2 0 0 1 2 2v2" stroke-width="1.5"/>
  <path d="M115.3 72.5v18a2.3 2.3 0 0 0 2.3 2.3h12.8a2.3 2.3 0 0 0 2.3-2.3v-18"/>
  <path d="M120 75v13.5M124 75v13.5M128 75v13.5" stroke-width="1.5"/>
 </g>
 <rect x="149" y="55" width="1" height="49" fill="#e6e9ec"/>
 <rect x="250" y="55" width="1" height="49" fill="#e6e9ec"/>
 <rect x="351" y="55" width="1" height="49" fill="#e6e9ec"/>
 <rect x="505" y="55" width="1" height="49" fill="#e6e9ec"/>
 <rect x="606" y="55" width="1" height="49" fill="#e6e9ec"/>
 <rect x="1501" y="55" width="1" height="49" fill="#e6e9ec"/>
 <!-- undo -->
 <path d="M164.6 79.6 L173.3 73.5 V77.9 H178.5 C183.2 77.9 185.9 80.8 186.4 85.4 C184 82.4 181.5 81.5 178 81.5 H173.3 V85.9 Z" fill="#2f3b4b"/>
 <!-- redo -->
 <path d="M235.3 79.6 L226.6 73.5 V77.9 H221.4 C216.7 77.9 214.0 80.8 213.5 85.4 C215.9 82.4 218.4 81.5 221.9 81.5 H226.6 V85.9 Z" fill="#cbd0d6"/>
 <!-- note -->
 <g fill="none" stroke="#2f3b47" stroke-width="2" stroke-linejoin="round">
  <path d="M267.3 69.3h16.400a3 3 0 0 1 3 3v14.700a3 3 0 0 1 -3 3h-4.600l-3.600 4.600l-3.600-4.600h-4.600a3 3 0 0 1 -3-3v-14.700a3 3 0 0 1 3-3z"/>
  <path d="M270.800 74.800h10M270.800 79.700h7.200M270.800 84.700h10" stroke-width="2.200" stroke-linecap="round"/>
  <path d="M317.400 69.300h16.400a3 3 0 0 1 3 3v14.700a3 3 0 0 1 -3 3h-4.600l-3.600 4.600l-3.600-4.600h-4.600a3 3 0 0 1 -3-3v-14.700a3 3 0 0 1 3-3z"/>
 </g>
 <path d="M317.500 79.500c2-3.600 5-5.400 8.100-5.400s6.100 1.800 8.100 5.400c-2 3.600-5 5.400-8.100 5.400s-6.100-1.800-8.100-5.400z" fill="#2f3b47"/>
 <circle cx="325.600" cy="79.500" r="3.300" fill="#f3f5f7"/>
 <!-- colour dropdown -->
 <rect x="358.500" y="62.500" width="63" height="36" rx="3" fill="#f5f7f9" stroke="#e6e9ec"/>
 <rect x="369" y="71" width="21" height="20" rx="4.500" fill="#393c41"/>
 <path d="M406.800 78.300h8.400l-4.200 5z" fill="#2f3135"/>
 <!-- line dropdown -->
 <rect x="429.500" y="62.500" width="69.500" height="36" rx="3" fill="#f5f7f9" stroke="#e6e9ec"/>
 <rect x="440.600" y="76.800" width="19.600" height="4" fill="#2f3135"/>
 <rect x="461.600" y="77.200" width="4.700" height="3.200" fill="#2f3135"/>
 <path d="M483.300 77.600h8.600l-4.300 5.200z" fill="#2f3135"/>
 <!-- rotate -->
 <g fill="none" stroke="#cdd2d8" stroke-width="1.900" stroke-linejoin="round">
  <path d="M537.800 71.600L524.300 83.300L530.300 90Z"/>
  <path d="M521.300 88c-3.600-3.600-3.400-9.600 2.200-13" stroke-width="1.800"/>
  <path d="M520.800 74.300l3.600 0.200l-0.600 3.300" stroke-width="1.500"/>
 </g>
 <!-- mirror -->
 <g fill="none" stroke="#cdd2d8" stroke-linejoin="round">
  <path d="M580.700 64.900v30.900" stroke-width="2.200"/>
  <path d="M576.300 71.500v18h-10z" stroke-width="1.200"/>
  <path d="M585.400 71.800v17.500h9.700z" stroke-width="2"/>
 </g>
 <!-- code icon -->
</svg>
<div class="abs" style="left:626px;top:15.7px;font-size:17px;line-height:20px;color:#a0a6ad;white-space:nowrap;letter-spacing:0.4px" id="simtime">Simulator time: 00:00:15</div>
<div class="btn" style="top:9px;left:1262px;width:89px;background:#3b8fd4"><span class="abs" style="left:42.5px;top:-0.5px;letter-spacing:-0.45px;color:#e6f5ff">Code</span></div>
<div class="btn" style="top:9px;left:1357px;width:137px;background:#5bb55f;text-align:center;letter-spacing:0.6px;line-height:31px;color:#e9fbe9">Stop Simulation</div>
<div class="btn" style="top:9px;left:1507.500px;width:83px;background:#f7f8fa;border:1px solid #e4e7ea;color:#3a4550;text-align:center;line-height:30px;letter-spacing:0.25px">Send To</div>
<svg class="abs" style="left:1262px;top:9px" width="40" height="33" viewBox="1262 64 40 33">
 <rect x="1272.700" y="72.900" width="21.800" height="15" rx="1" fill="none" stroke="#f2faff" stroke-width="1.600"/>
 <rect x="1272" y="72.200" width="23.200" height="4.300" fill="#f2faff"/>
 <circle cx="1275.300" cy="74.300" r="0.800" fill="#3b8fd4"/><circle cx="1278" cy="74.300" r="0.800" fill="#3b8fd4"/><circle cx="1280.700" cy="74.300" r="0.800" fill="#3b8fd4"/>
 <path d="M1282.800 79l-5 3l5 3M1289.300 78.400l-3.300 7.300" fill="none" stroke="#f2faff" stroke-width="1.800"/>
</svg>

</div>
<div class="abs" id="header">

<div class="tile" style="left:1.6px;top:3px;background:#e2502e">T</div>
<div class="tile" style="left:17.2px;top:3px;background:#e9773c">I</div>
<div class="tile" style="left:32.8px;top:3px;background:#e99a50">N</div>
<div class="tile" style="left:1.6px;top:18.6px;background:#53a650">K</div>
<div class="tile" style="left:17.2px;top:18.6px;background:#92c03a">E</div>
<div class="tile" style="left:32.8px;top:18.6px;background:#c5c748">R</div>
<div class="tile" style="left:1.6px;top:34.2px;background:#1f5ba3">C</div>
<div class="tile" style="left:17.2px;top:34.2px;background:#4a8fc4">A</div>
<div class="tile" style="left:32.8px;top:34.2px;background:#78aed6">D</div>
<div class="abs" id="title" style="top:15.6px">Glorious Curcan-Amberis</div>
<div class="abs" id="saved" style="top:15.7px;letter-spacing:0.6px;color:#cfd3d7">All changes saved</div>
<div class="abs" style="left:1390px;top:0;width:52px;height:50px;background:#3b8fd4"></div>
<svg class="abs" style="left:1390px;top:0" width="208" height="50" viewBox="1390 5 208 50">
 <!-- circuit view icon (active) -->
 <rect x="1409.700" y="20" width="13.300" height="20" rx="1.600" fill="#fff"/>
 <g fill="#c4e5ff">
  <rect x="1406.800" y="22.700" width="2.900" height="3.300"/><rect x="1406.800" y="28.700" width="2.900" height="3.300"/><rect x="1406.800" y="34.500" width="2.900" height="3.300"/>
  <rect x="1423" y="22.700" width="2.900" height="3.300"/><rect x="1423" y="28.700" width="2.900" height="3.300"/><rect x="1423" y="34.500" width="2.900" height="3.300"/>
 </g>
 <path d="M1414.800 20.300h3.200l-1.600 2.300z" fill="#3b8fd4"/>
 <!-- schematic icon -->
 <g fill="none" stroke="#2f3b47" stroke-width="2">
  <rect x="1464" y="21" width="9.700" height="18"/>
  <path d="M1457.400 24.200h5.600M1457.400 30h5.600M1457.400 35.900h5.600M1474.700 24.200h3.800M1474.700 30h3.800M1474.700 35.900h3.800"/>
 </g>
 <!-- list icon -->
 <g>
  <rect x="1509" y="22" width="23" height="4.800" fill="#2f3b47"/>
  <rect x="1509.600" y="22.600" width="21.800" height="15.600" fill="none" stroke="#3e4853" stroke-width="1.200"/>
  <path d="M1509 31h23M1509 34.900h23M1514.200 26.500v12" stroke="#4a535d" stroke-width="1" fill="none"/>
 </g>
 <!-- avatar -->
 <rect x="1546" y="5" width="1" height="50" fill="#eceff1"/>
 <clipPath id="avc"><circle cx="1573.200" cy="31.800" r="23.100"/></clipPath>
 <circle cx="1573.200" cy="31.800" r="23.100" fill="#4f7fd1"/>
 <g clip-path="url(#avc)" fill="#e9ecf6">
  <circle cx="1573.300" cy="27.300" r="10.800"/>
  <ellipse cx="1573.300" cy="54.500" rx="14.300" ry="15.200"/>
 </g>
</svg>

</div>
<div class="abs" id="topbar"></div>
</body>
</html>
